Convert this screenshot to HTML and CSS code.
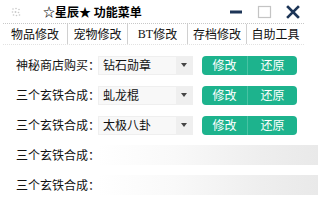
FILE: index.html
```html
<!DOCTYPE html>
<html lang="zh-CN">
<head>
<meta charset="utf-8">
<title>☆星辰★ 功能菜单</title>
<link rel="stylesheet" href="styles.css">
</head>
<body>
<div class="window">
  <div class="titlebar">
    <svg class="app-icon" width="10" height="10" viewBox="0 0 10 10">
      <g fill="#c8c8c8">
        <circle cx="2" cy="2" r="0.8"/><circle cx="5" cy="1.5" r="0.8"/><circle cx="8" cy="2.5" r="0.8"/>
        <circle cx="1.5" cy="5" r="0.8"/><circle cx="4.5" cy="5" r="0.9"/><circle cx="7.5" cy="5.5" r="0.8"/>
        <circle cx="2.5" cy="8" r="0.8"/><circle cx="5.5" cy="8.5" r="0.8"/><circle cx="8.5" cy="8" r="0.8"/>
      </g>
    </svg>
    <div class="title">☆星辰★ 功能菜单</div>
    <div class="controls">
      <svg class="ctl" width="14" height="14" viewBox="0 0 14 14"><rect x="1" y="5.5" width="12" height="3" fill="#1d3557"/></svg>
      <svg class="ctl" width="15" height="14" viewBox="0 0 15 14"><rect x="1.5" y="1.5" width="12" height="11" fill="none" stroke="#c4c4c4" stroke-width="1.2"/></svg>
      <svg class="ctl" width="14" height="14" viewBox="0 0 14 14"><path d="M2 2 L12 12 M12 2 L2 12" stroke="#1d3557" stroke-width="2.6" stroke-linecap="square"/></svg>
    </div>
  </div>
  <div class="tabs">
    <div class="tab t1 active">物品修改</div>
    <div class="tab t2">宠物修改</div>
    <div class="tab t3"><span class="latin">BT</span>修改</div>
    <div class="tab t4">存档修改</div>
    <div class="tab t5">自助工具</div>
  </div>
  <div class="rows">
    <div class="row">
      <span class="label">神秘商店购买：</span>
      <div class="select"><span class="val">钻石勋章</span><span class="arrow"></span></div>
      <div class="btns"><span class="btn">修改</span><span class="btn">还原</span></div>
    </div>
    <div class="row">
      <span class="label">三个玄铁合成：</span>
      <div class="select"><span class="val">虬龙棍</span><span class="arrow"></span></div>
      <div class="btns"><span class="btn">修改</span><span class="btn">还原</span></div>
    </div>
    <div class="row">
      <span class="label">三个玄铁合成：</span>
      <div class="select"><span class="val">太极八卦</span><span class="arrow"></span></div>
      <div class="btns"><span class="btn">修改</span><span class="btn">还原</span></div>
    </div>
    <div class="row">
      <span class="label">三个玄铁合成：</span>
      <div class="field"></div>
    </div>
    <div class="row">
      <span class="label">三个玄铁合成：</span>
      <div class="field"></div>
    </div>
  </div>
</div>
</body>
</html>
```
FILE: styles.css
```css
* { box-sizing: border-box; }
html, body { margin: 0; padding: 0; background: #fff; }
body {
  width: 318px;
  height: 213px;
  overflow: hidden;
  font-family: "Noto Sans CJK SC", "Liberation Sans", sans-serif;
  font-size: 12px;
  color: #111;
}
.window { width: 318px; height: 213px; }
.titlebar {
  height: 23px;
  display: flex;
  align-items: center;
}
.app-icon { margin-left: 11px; }
.title {
  margin-left: 22px;
  font-weight: bold;
  font-size: 12px;
  line-height: 14px;
  color: #000;
}
.controls {
  margin-left: auto;
  margin-right: 18px;
  display: flex;
  align-items: center;
  gap: 14px;
}
.tabs {
  margin-left: 3px;
  width: 301px;
  height: 22px;
  display: flex;
  border-top: 1px dotted #c8c8c8;
  border-bottom: 1px dotted #e2e2e2;
}
.tab {
  display: flex;
  align-items: center;
  justify-content: center;
  height: 20px;
  line-height: 14px;
  border-right: 1px solid #d0d0d0;
  color: #111;
}
.tab:last-child { border-right: none; }
.t1 { width: 65px; }
.t2 { width: 60px; }
.t3 { width: 60px; }
.t4 { width: 59px; }
.t5 { width: 57px; }
.latin { font-family: "Liberation Serif", serif; font-size: 12px; }
.rows { padding-top: 5px; padding-left: 16px; }
.row {
  height: 30px;
  display: flex;
  align-items: center;
}
.label {
  width: 82px;
  line-height: 14px;
  white-space: nowrap;
}
.select {
  width: 95px;
  height: 19px;
  display: flex;
  align-items: center;
  background: #f8f8f8;
  border: 1px solid #efefef;
  position: relative;
}
.select .val { padding-left: 4px; line-height: 14px; }
.select .arrow {
  margin-left: auto;
  width: 16px;
  height: 17px;
  background: #efefef;
  display: flex;
  align-items: center;
  justify-content: center;
}
.select .arrow::after {
  content: "";
  border-left: 3.5px solid transparent;
  border-right: 3.5px solid transparent;
  border-top: 4px solid #444;
}
.btns {
  margin-left: 9px;
  display: flex;
}
.btn {
  height: 19px;
  background: #1db38d;
  color: #fff;
  display: flex;
  align-items: center;
  justify-content: center;
  line-height: 14px;
}
.btn:first-child { width: 46px; border-radius: 4px 0 0 4px; border-right: 1px solid #48c2a3; }
.btn:last-child { width: 49px; border-radius: 0 4px 4px 0; }
.field {
  flex: 1;
  height: 20px;
  background: linear-gradient(to right, #ffffff 0%, #f9f9f9 35%, #eeeeee 75%, #e9e9e9 100%);
}
```
